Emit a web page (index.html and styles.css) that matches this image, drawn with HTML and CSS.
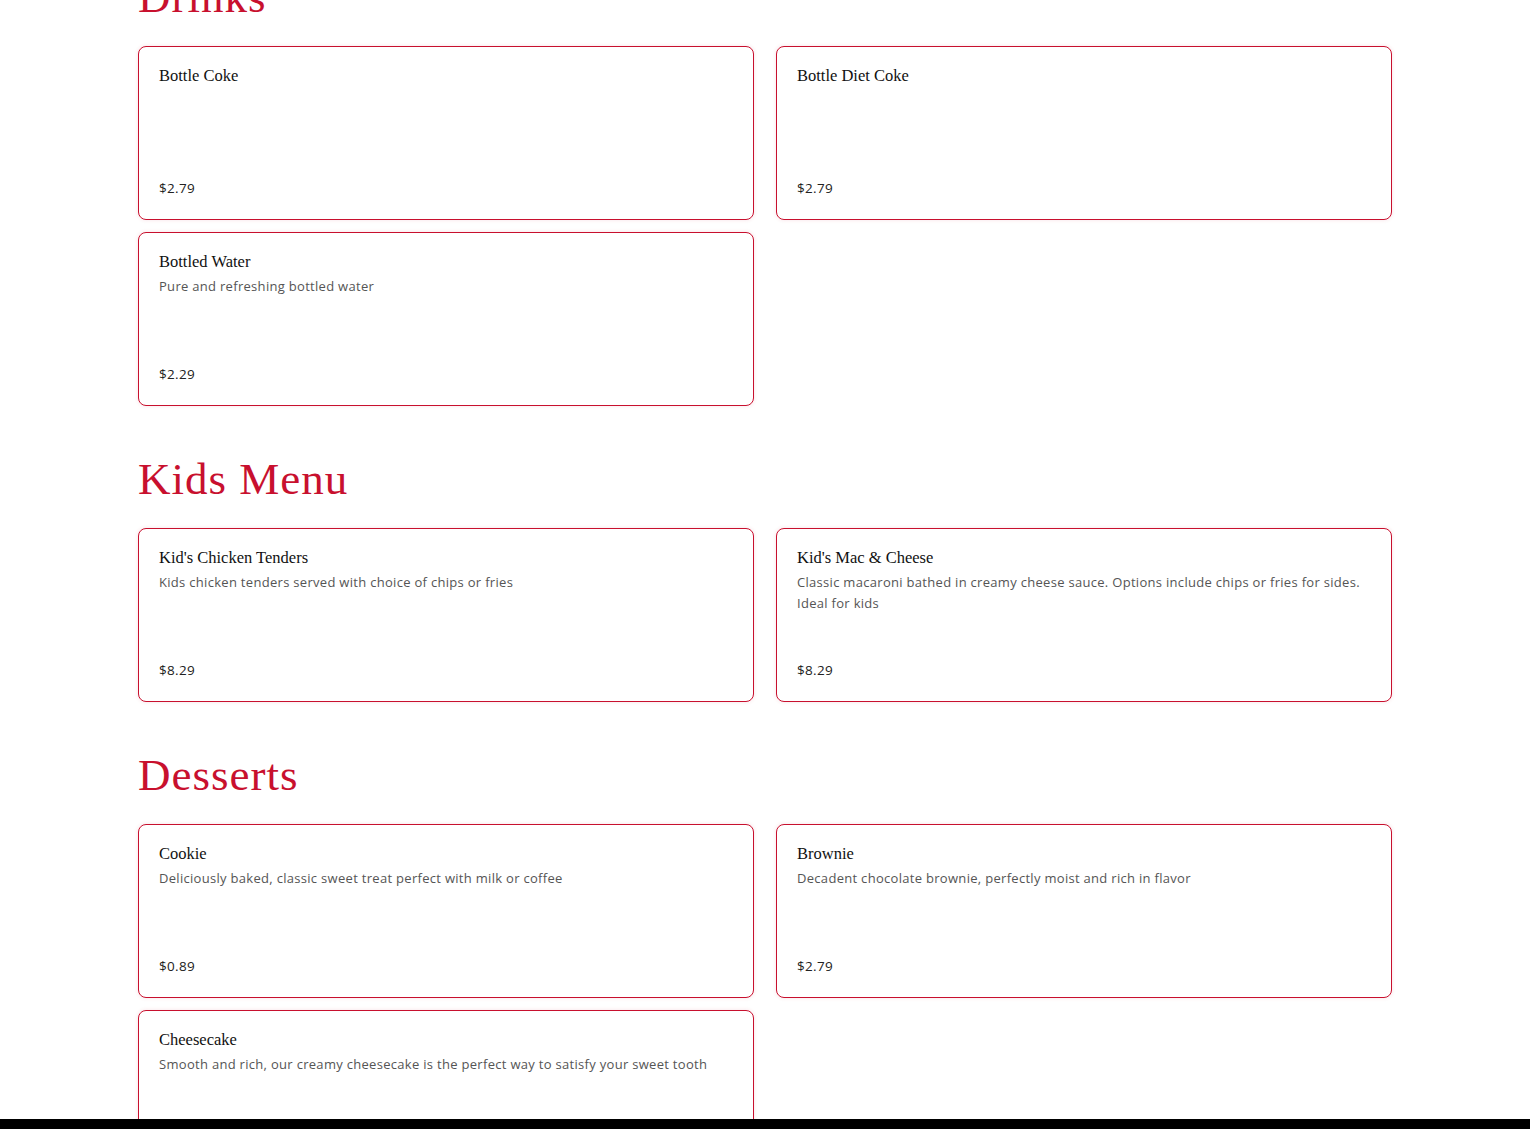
FILE: index.html
```html
<!DOCTYPE html>
<html lang="en">
<head>
    <meta charset="UTF-8">
    <meta name="viewport" content="width=device-width, initial-scale=1.0">
    <title>Menu</title>
    <link rel="stylesheet" href="styles.css">
</head>
<body>

    <main class="menu">
        <section class="menu-section">
            <h2>Drinks</h2>
            <div class="items">
                <div class="item">
                    <h3>Bottle Coke</h3>
                    <p class="price">$2.79</p>
                </div>
                <div class="item">
                    <h3>Bottle Diet Coke</h3>
                    <p class="price">$2.79</p>
                </div>
                <div class="item">
                    <h3>Bottled Water</h3>
                    <p class="desc">Pure and refreshing bottled water</p>
                    <p class="price">$2.29</p>
                </div>
            </div>
        </section>

        <section class="menu-section">
            <h2>Kids Menu</h2>
            <div class="items">
                <div class="item">
                    <h3>Kid's Chicken Tenders</h3>
                    <p class="desc">Kids chicken tenders served with choice of chips or fries</p>
                    <p class="price">$8.29</p>
                </div>
                <div class="item">
                    <h3>Kid's Mac &amp; Cheese</h3>
                    <p class="desc">Classic macaroni bathed in creamy cheese sauce. Options include chips or fries for sides. Ideal for kids</p>
                    <p class="price">$8.29</p>
                </div>
            </div>
        </section>

        <section class="menu-section">
            <h2>Desserts</h2>
            <div class="items">
                <div class="item">
                    <h3>Cookie</h3>
                    <p class="desc">Deliciously baked, classic sweet treat perfect with milk or coffee</p>
                    <p class="price">$0.89</p>
                </div>
                <div class="item">
                    <h3>Brownie</h3>
                    <p class="desc">Decadent chocolate brownie, perfectly moist and rich in flavor</p>
                    <p class="price">$2.79</p>
                </div>
                <div class="item">
                    <h3>Cheesecake</h3>
                    <p class="desc">Smooth and rich, our creamy cheesecake is the perfect way to satisfy your sweet tooth</p>
                </div>
            </div>
        </section>
    </main>

    <div class="bottom-bar"></div>

</body>
</html>
```

FILE: styles.css
```css
body {
    font-family: 'Liberation Serif', serif;
    margin: 0;
    padding: 0;
    background-color: #fff;
    color: #111;
}

.menu {
    max-width: 1254px;
    margin: -30px auto 0;
    padding-bottom: 60px;
}

.menu-section h2 {
    font-size: 45px;
    font-weight: normal;
    line-height: 54px;
    letter-spacing: 1px;
    color: #c8102e;
    margin: 0 0 22px;
}

.menu-section + .menu-section {
    margin-top: 46px;
}

.items {
    display: grid;
    grid-template-columns: 1fr 1fr;
    column-gap: 22px;
    row-gap: 12px;
}

.item {
    display: flex;
    flex-direction: column;
    height: 174px;
    box-sizing: border-box;
    padding: 20px;
    border: 1px solid #c8102e;
    border-radius: 8px;
    box-shadow: 0 0 4px rgba(200, 16, 46, 0.12);
    background: #fff;
}

.item h3 {
    font-size: 16.5px;
    font-weight: normal;
    line-height: 18px;
    margin: 0 0 5px;
}

.desc {
    font-family: 'Open Sans', sans-serif;
    font-size: 13px;
    line-height: 21px;
    letter-spacing: 0.3px;
    color: #555;
    margin: 0;
}

.price {
    font-family: 'Open Sans', sans-serif;
    font-size: 13.5px;
    line-height: 20px;
    letter-spacing: 0.3px;
    color: #222;
    margin: auto 0 1px;
}

.bottom-bar {
    position: fixed;
    left: 0;
    right: 0;
    bottom: 0;
    height: 10px;
    background: #000;
}
```
